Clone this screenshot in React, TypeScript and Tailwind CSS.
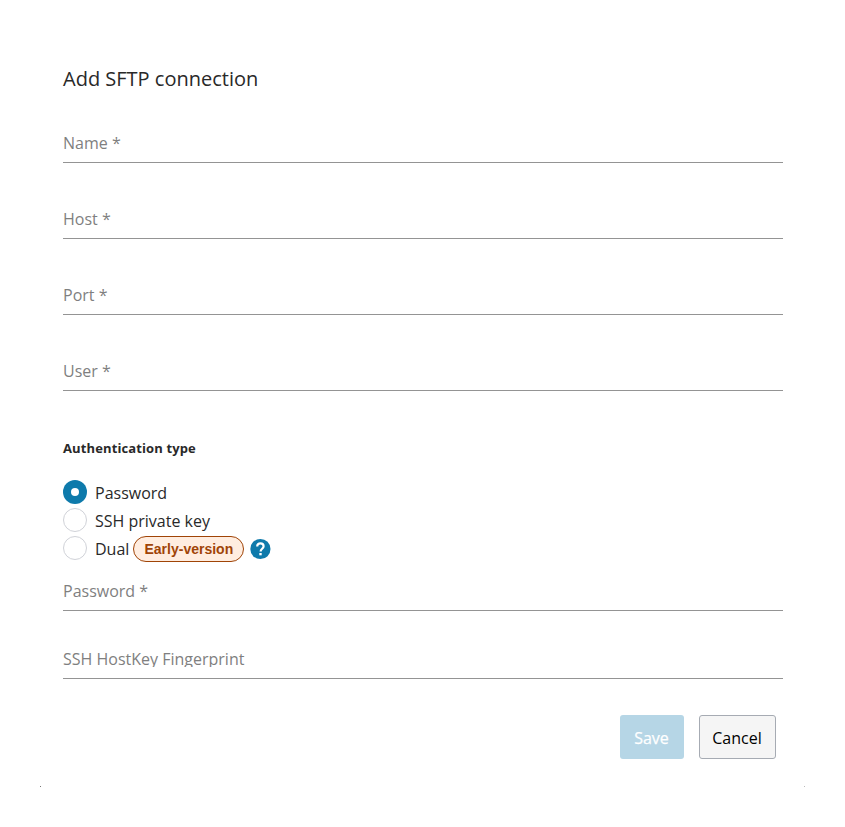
import { useState } from "react";

interface FieldProps {
  label: string;
  className?: string;
  labelClassName?: string;
}

const AUTH_TYPES = ["Password", "SSH private key", "Dual"];

const Field = ({ label, className = "", labelClassName = "h-6" }: FieldProps) => (
  <div className={`h-8 border-b border-[#949494] ${className}`}>
    <div className={`overflow-hidden text-base leading-6 text-[#7f7f7f] ${labelClassName}`}>
      {label}
    </div>
  </div>
);

const HelpIcon = () => (
  <svg className="ml-1 h-6 w-[25px]" viewBox="0 0 25 24" fill="none">
    <circle cx="12.4" cy="12" r="10.1" fill="#0e7aab" />
    <path
      d="M9.2 9.4c0-1.9 1.4-3.1 3.2-3.1s3.2 1.2 3.2 2.9c0 2.5-3 2.6-3 5.3"
      stroke="#fff"
      strokeWidth="2.2"
    />
    <rect x="11.3" y="16" width="2.4" height="2.3" fill="#fff" />
  </svg>
);

const App = () => {
  const [authType, setAuthType] = useState("Password");

  return (
    <div className="flex h-[827px] w-[845px] flex-col bg-white font-['Open_Sans','Noto_Sans',sans-serif] text-[#292929]">
      <div className="flex flex-col px-[63px] pt-[63px] pr-[62px]">
        <h2 className="text-xl leading-8">Add SFTP connection</h2>

        <div className="mt-9 flex flex-col gap-11">
          <Field label="Name *" />
          <Field label="Host *" />
          <Field label="Port *" />
          <Field label="User *" />
        </div>

        {/* Authentication type */}
        <h3 className="mt-[47px] text-[13px] leading-5 font-bold tracking-[0.12px]">
          Authentication type
        </h3>
        <div className="mt-[22px] flex flex-col gap-1">
          {AUTH_TYPES.map((type) => (
            <div
              key={type}
              className="flex h-6 cursor-pointer items-center"
              onClick={() => setAuthType(type)}
            >
              {authType === type ? (
                <span className="flex h-6 w-6 items-center justify-center rounded-full bg-[#0e7aab]">
                  <span className="h-2 w-2 rounded-full bg-white" />
                </span>
              ) : (
                <span className="h-6 w-6 rounded-full border border-[#d0d2d8] bg-white" />
              )}
              <span className="ml-2 pt-0.5 text-base leading-6">{type}</span>
              {type === "Dual" && (
                <div className="ml-1 flex items-center pt-0.5">
                  <span className="flex h-[26px] w-[111px] items-center justify-center rounded-full border border-[#a04407] bg-[#ffede0] font-['Liberation_Sans',Arial,sans-serif] text-sm font-bold text-[#a04407]">
                    Early-version
                  </span>
                  <HelpIcon />
                </div>
              )}
            </div>
          ))}
        </div>

        <Field label="Password *" className="mt-[19px]" />
        <Field label="SSH HostKey Fingerprint" className="mt-9" labelClassName="h-5" />

        {/* Actions */}
        <div className="mt-9 mr-[7px] flex justify-end gap-[15px]">
          <button
            className="h-11 w-16 rounded-[3px] bg-[#b6d6e6] pt-0.5 pr-px text-base text-white [-webkit-text-stroke:0.25px_white]"
            disabled
          >
            Save
          </button>
          <button className="h-11 w-[77px] rounded-[3px] border border-[#a6abb3] bg-[#f5f5f5] pt-0.5 pr-px text-base text-black">
            Cancel
          </button>
        </div>
      </div>

      {/* Dialog corner marks */}
      <div className="mt-[27px] flex justify-between px-10">
        <span className="h-px w-px bg-[#777777]" />
        <span className="h-px w-px bg-[#bbbbbb]" />
      </div>
    </div>
  );
};

export default App;
